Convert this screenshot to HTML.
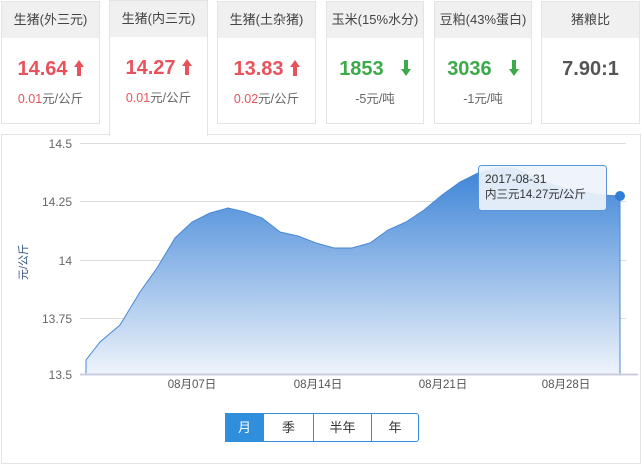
<!DOCTYPE html>
<html><head><meta charset="utf-8"><style>
body{margin:0;width:642px;height:451px;background:#fff;font-family:"Liberation Sans","Noto Sans CJK SC",sans-serif;position:relative;overflow:hidden}
.card{position:absolute;top:1px;height:123px;border:1px solid #e3e3e3;background:#fff;box-sizing:border-box;text-align:center}
.card .h{height:36px;background:#f0f0f0;line-height:36px;font-size:13px;color:#444}
.card .v{font-size:20px;font-weight:bold;margin-top:18px;height:26px;line-height:26px}
.card .v svg{vertical-align:-1px;margin-left:6px}
.card .d{font-size:12.5px;color:#666;margin-top:6px}
.red{color:#e8525c}.grn{color:#3daa4a}
.panel{position:absolute;left:1px;top:134px;width:640px;height:330px;border:1px solid #e3e3e3;box-sizing:border-box}
.btns{position:absolute;top:413px;left:225px;height:29px;display:flex;font-size:13px}
.btns div{border:1px solid #2f8fdc;border-left:none;line-height:27px;text-align:center;color:#333}
</style></head><body>
<div class="panel"></div>
<div style="position:absolute;left:109px;top:0;width:99px;height:136px;background:#fff;border:1px solid #e3e3e3;border-bottom:none;box-sizing:border-box"></div>
<div class="card" style="left:1px;width:99px"><div class="h">生猪(外三元)</div><div class="v red">14.64<svg width="10" height="16" viewBox="0 0 10 16"><path d="M5 0L10 7H7V16H3V7H0Z" fill="#e8525c"/></svg></div><div class="d"><span class="red">0.01</span>元/公斤</div></div>
<div class="card" style="left:110px;width:97px;border:none"><div class="h">生猪(内三元)</div><div class="v red">14.27<svg width="10" height="16" viewBox="0 0 10 16"><path d="M5 0L10 7H7V16H3V7H0Z" fill="#e8525c"/></svg></div><div class="d"><span class="red">0.01</span>元/公斤</div></div>
<div class="card" style="left:217px;width:99px"><div class="h">生猪(土杂猪)</div><div class="v red">13.83<svg width="10" height="16" viewBox="0 0 10 16"><path d="M5 0L10 7H7V16H3V7H0Z" fill="#e8525c"/></svg></div><div class="d"><span class="red">0.02</span>元/公斤</div></div>
<div class="card" style="left:326px;width:98px"><div class="h">玉米(15%水分)</div><div class="v grn">1853 &nbsp;<svg width="10" height="16" viewBox="0 0 10 16"><path d="M5 16L10 9H7V0H3V9H0Z" fill="#3daa4a"/></svg></div><div class="d">-5元/吨</div></div>
<div class="card" style="left:434px;width:98px"><div class="h">豆粕(43%蛋白)</div><div class="v grn">3036 &nbsp;<svg width="10" height="16" viewBox="0 0 10 16"><path d="M5 16L10 9H7V0H3V9H0Z" fill="#3daa4a"/></svg></div><div class="d">-1元/吨</div></div>
<div class="card" style="left:541px;width:99px"><div class="h">猪粮比</div><div class="v" style="color:#555">7.90:1</div></div>
<svg style="position:absolute;left:0;top:0" width="642" height="451">
<defs><linearGradient id="g" gradientUnits="userSpaceOnUse" x1="0" y1="165" x2="0" y2="374"><stop offset="0" stop-color="#3a82d6"/><stop offset="1" stop-color="#eef3fb"/></linearGradient></defs>
<g stroke="#dcdcdc" stroke-width="1">
<line x1="80" y1="143.5" x2="626" y2="143.5"/><line x1="80" y1="201.5" x2="626" y2="201.5"/><line x1="80" y1="260.5" x2="626" y2="260.5"/><line x1="80" y1="318.5" x2="626" y2="318.5"/></g>
<path d="M86,360 L100,342 L120,325 L140,292 L157,268 L175,238 L192,222 L210,213 L228,208 L245,212 L262,218 L280,232 L298,236 L316,243 L334,248 L352,248 L370,243 L388,230 L406,222 L424,210 L442,195 L460,182 L478,173 L496,168 L514,168 L540,180 L570,190 L600,195 L620,196 L620,374 L86,374Z" fill="url(#g)" stroke="#4a88d4" stroke-width="1"/>
<line x1="80" y1="374.5" x2="638" y2="374.5" stroke="#ccd" stroke-width="2"/>
<circle cx="620" cy="196" r="5" fill="#2f7fd6"/>
<g font-size="12" fill="#666" text-anchor="end"><text x="72" y="148">14.5</text><text x="72" y="206">14.25</text><text x="72" y="265">14</text><text x="72" y="323">13.75</text><text x="72" y="379">13.5</text></g>
<g font-size="11.5" fill="#555" text-anchor="middle"><text x="192" y="388">08月07日</text><text x="318" y="388">08月14日</text><text x="443" y="388">08月21日</text><text x="566" y="388">08月28日</text></g>
<text transform="translate(27,262) rotate(-90)" font-size="11" fill="#36557a" text-anchor="middle">元/公斤</text>
<rect x="478.5" y="165.5" width="128" height="45" rx="3" fill="#eef3fb" fill-opacity="0.92" stroke="#5b95d9"/>
<text x="485" y="183" font-size="12" fill="#333">2017-08-31</text>
<text x="485" y="198" font-size="11.5" fill="#333">内三元14.27元/公斤</text>
</svg>
<div class="btns"><div style="width:37px;background:#2f8fdc;color:#fff;border-left:1px solid #2f8fdc">月</div><div style="width:49px">季</div><div style="width:57px">半年</div><div style="width:46px;border-radius:0 3px 3px 0">年</div></div>
</body></html>
